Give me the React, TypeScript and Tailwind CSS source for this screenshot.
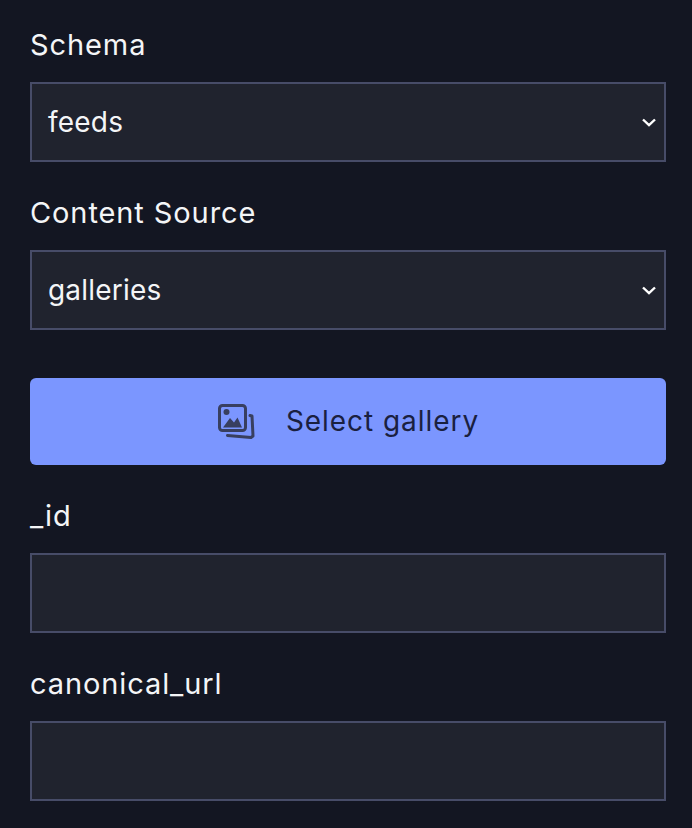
const font = { fontFamily: '"Inter", "Noto Sans", sans-serif' };

function Label({ children }: { children: string }) {
  return <label className="block h-[40px] text-[29px] leading-[38px] tracking-[0.9px] text-[#f4f5f7]">{children}</label>;
}

function Chevron() {
  return (
    <svg width="14" height="9" viewBox="0 0 14 9" fill="none" className="text-white">
      <path d="M1 1.5 L7 7.2 L13 1.5" stroke="currentColor" strokeWidth="2.4" />
    </svg>
  );
}

function SelectBox({ value }: { value: string }) {
  return (
    <div className="flex h-[80px] items-center justify-between border-2 border-[#474c68] bg-[#20232e] pl-[16px] pr-[8px] text-[28px] tracking-[0.2px] text-[#f4f5f7]">
      <span>{value}</span>
      <Chevron />
    </div>
  );
}

function GalleryIcon() {
  return (
    <svg width="38" height="36" viewBox="0 0 38 36" fill="none" className="text-[#383f60]">
      <rect x="2.5" y="2.5" width="26" height="25" rx="3" stroke="currentColor" strokeWidth="3" />
      <circle cx="9.5" cy="9" r="3" fill="currentColor" />
      <path d="M6 24.5 L13 15 L17 19.5 L20.5 14.5 L25 24.5 Z" fill="currentColor" />
      <path d="M33 12.5 L35 13 L36 33 L34 34.5 L10.5 32.5" stroke="currentColor" strokeWidth="3" strokeLinecap="round" strokeLinejoin="round" />
    </svg>
  );
}

export default function App() {
  return (
    <div className="min-h-[828px] bg-[#131622] px-[30px] pt-[26px]" style={font}>
      <div className="flex w-[636px] flex-col">
        <Label>Schema</Label>
        <div className="mt-[16px]"><SelectBox value="feeds" /></div>
        <div className="mt-[32px]"><Label>Content Source</Label></div>
        <div className="mt-[16px]"><SelectBox value="galleries" /></div>
        <button className="mt-[48px] flex h-[87px] items-center justify-center gap-[31px] rounded-[6px] bg-[#7b96ff] pb-[2px] text-[28px] tracking-[0.95px] text-[#1a2040]">
          <GalleryIcon />
          <span>Select gallery</span>
        </button>
        <div className="mt-[32px]"><Label>_id</Label></div>
        <div className="mt-[16px] h-[80px] border-2 border-[#474c68] bg-[#20232e]" />
        <div className="mt-[32px]"><Label>canonical_url</Label></div>
        <div className="mt-[16px] h-[80px] border-2 border-[#474c68] bg-[#20232e]" />
      </div>
    </div>
  );
}
